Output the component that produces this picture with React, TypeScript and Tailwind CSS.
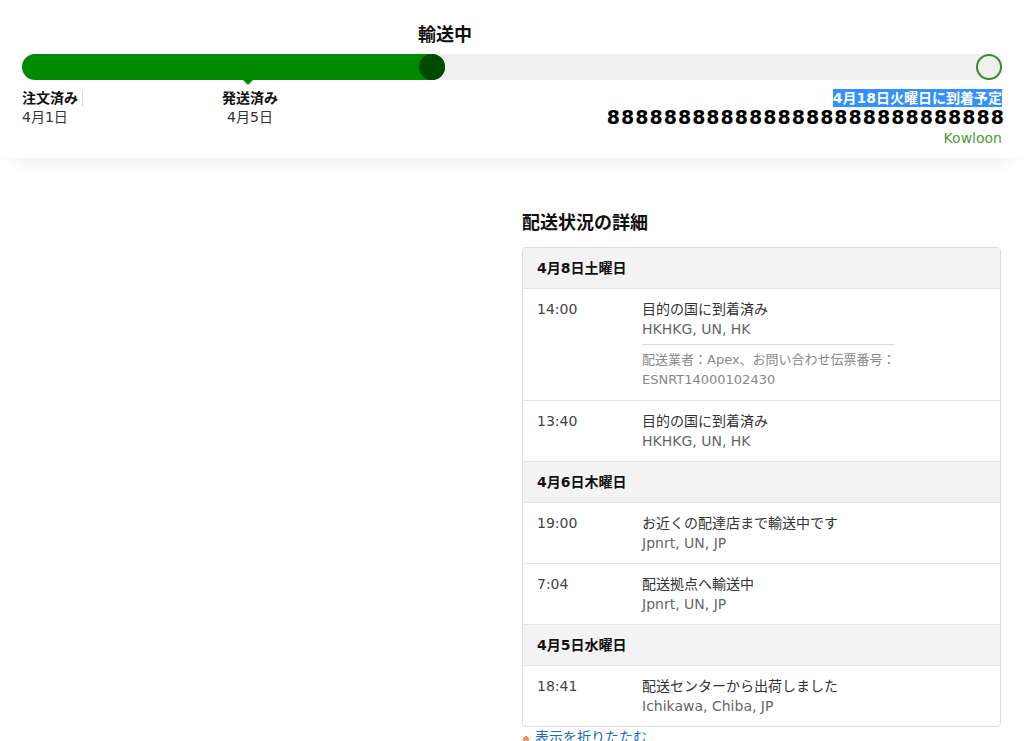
import React from "react";

const FONT = '"DejaVu Sans", "Noto Sans CJK JP", sans-serif';

type Ev = { time: string; title: string; loc: string; extra?: string[] };
type Day = { date: string; events: Ev[] };

const days: Day[] = [
  {
    date: "4月8日土曜日",
    events: [
      {
        time: "14:00",
        title: "目的の国に到着済み",
        loc: "HKHKG, UN, HK",
        extra: ["配送業者：Apex、お問い合わせ伝票番号：", "ESNRT14000102430"],
      },
      { time: "13:40", title: "目的の国に到着済み", loc: "HKHKG, UN, HK" },
    ],
  },
  {
    date: "4月6日木曜日",
    events: [
      { time: "19:00", title: "お近くの配達店まで輸送中です", loc: "Jpnrt, UN, JP" },
      { time: "7:04", title: "配送拠点へ輸送中", loc: "Jpnrt, UN, JP" },
    ],
  },
  {
    date: "4月5日水曜日",
    events: [
      { time: "18:41", title: "配送センターから出荷しました", loc: "Ichikawa, Chiba, JP" },
    ],
  },
];

export default function App() {
  const items: React.ReactNode[] = [];
  days.forEach((d, di) => {
    items.push(
      <div key={"h" + di} className="bg-[#f3f3f3] px-[14px] text-[14px] leading-[40px] font-bold text-[#111]">
        {d.date}
      </div>
    );
    d.events.forEach((e, ei) => {
      items.push(
        <div key={"e" + di + "-" + ei} className="flex px-[14px] py-[10px]">
          <div className="w-[105px] shrink-0 text-[14px] leading-[20px] text-[#444]">{e.time}</div>
          <div className="w-[253px]">
            <div className="text-[14px] leading-[20px] text-[#333] whitespace-nowrap">{e.title}</div>
            <div className="text-[14px] leading-[20px] text-[#666]">{e.loc}</div>
            {e.extra && (
              <div className="mt-[5px] border-t border-[#dddddd] pt-[5px]">
                {e.extra.map((x, xi) => (
                  <div key={xi} className="text-[13px] leading-[20px] text-[#888] whitespace-nowrap">
                    {x}
                  </div>
                ))}
              </div>
            )}
          </div>
        </div>
      );
    });
  });

  return (
    <div className="w-[1024px] h-[741px] overflow-hidden bg-white text-[#333]" style={{ fontFamily: FONT }}>
      {/* Top tracker */}
      <div className="h-[158px] pt-[23px] shadow-[0_12px_20px_-14px_rgba(0,0,0,0.14)]">
        <div className="pl-[418px] text-[18px] leading-[24px] font-bold text-[#111]">輸送中</div>
        <div className="mx-[22px] mt-[7px] relative h-[26px] rounded-full bg-[#f0f0f0]">
          <div className="relative h-[26px] w-[423px] rounded-full bg-[#008a00]">
            <div className="absolute right-0 top-0 h-[26px] w-[26px] rounded-full bg-[#004a00]" />
          </div>
          <div className="absolute right-0 top-0 h-[26px] w-[26px] rounded-full border-2 border-[#2f8f2f]" />
          <div className="absolute left-[221px] top-[26px] h-0 w-0 border-l-[5px] border-r-[5px] border-t-[5px] border-l-transparent border-r-transparent border-t-[#008a00]" />
        </div>
        <div className="mt-[8px] flex px-[22px]">
          <div className="w-[200px]">
            <div className="text-[14px] leading-[20px] font-bold text-[#111]">
              <span className="border-r border-[#cfdff0] pr-[4px]">注文済み</span>
            </div>
            <div className="text-[14px] leading-[19px]">4月1日</div>
          </div>
          <div className="w-[56px] text-center">
            <div className="-mx-[2px] text-[14px] leading-[20px] font-bold text-[#111] whitespace-nowrap">発送済み</div>
            <div className="text-[14px] leading-[19px]">4月5日</div>
          </div>
          <div className="flex flex-1 flex-col items-end">
            <span className="mt-[1px] bg-[#3390ff] text-[14px] leading-[18px] font-bold text-white">
              4月18日火曜日に到着予定
            </span>
            <div className="mr-[-3px] mt-[1px] flex w-[400px] justify-end overflow-hidden whitespace-nowrap">
              <span
                className="text-[19px] leading-[18px] font-bold tracking-[1px] text-black"
                style={{ fontFamily: '"DejaVu Sans", sans-serif' }}
              >
                B8888888888888888888888888888888
              </span>
            </div>
            <div className="mt-[3px] text-[14px] leading-[18px] text-[#4a9a3a]">Kowloon</div>
          </div>
        </div>
      </div>

      {/* Details */}
      <div className="mt-[53px] flex">
        <div className="w-[522px]" />
        <div className="w-[479px]">
          <h2 className="text-[18px] leading-[24px] font-bold text-[#111]">配送状況の詳細</h2>
          <div className="mt-[12px] overflow-hidden rounded-[4px] border border-[#dddddd] divide-y divide-[#e3e3e3]">
            {items}
          </div>
          <div className="flex items-center gap-[5px] text-[14px] leading-[20px] text-[#1a6cc4]">
            <svg width="8" height="8" viewBox="0 0 8 8" className="mt-[4px]">
              <path d="M1 4.5 L4 1.5 L7 4.5" stroke="#e07040" strokeWidth="1.4" fill="none" />
              <path d="M1 7 L4 4 L7 7" stroke="#e07040" strokeWidth="1.4" fill="none" />
            </svg>
            <span>表示を折りたたむ</span>
          </div>
        </div>
      </div>
    </div>
  );
}
